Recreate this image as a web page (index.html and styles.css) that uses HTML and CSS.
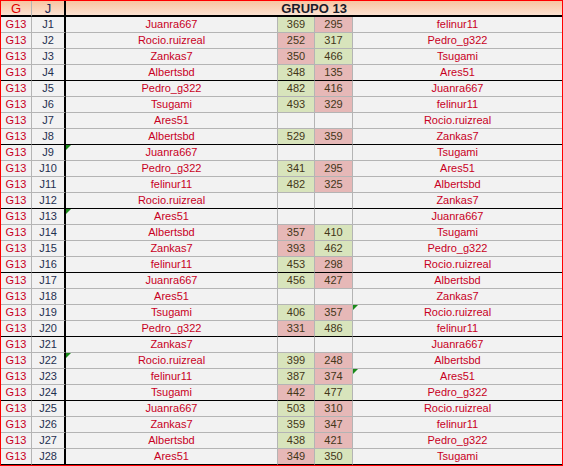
FILE: index.html
```html
<!DOCTYPE html>
<html>
<head>
<meta charset="utf-8">
<link rel="stylesheet" href="styles.css">
</head>
<body>
<div class="sheet">
  <div class="row head"><div class="c g">G</div><div class="c j">J</div><div class="c title">GRUPO 13</div></div>
  <div class="row"><div class="c g">G13</div><div class="c j">J1</div><div class="c n">Juanra667</div><div class="c s w">369</div><div class="c s l">295</div><div class="c n last">felinur11</div></div>
  <div class="row"><div class="c g">G13</div><div class="c j">J2</div><div class="c n">Rocio.ruizreal</div><div class="c s l">252</div><div class="c s w">317</div><div class="c n last">Pedro_g322</div></div>
  <div class="row"><div class="c g">G13</div><div class="c j">J3</div><div class="c n">Zankas7</div><div class="c s l">350</div><div class="c s w">466</div><div class="c n last">Tsugami</div></div>
  <div class="row end"><div class="c g">G13</div><div class="c j">J4</div><div class="c n">Albertsbd</div><div class="c s w">348</div><div class="c s l">135</div><div class="c n last">Ares51</div></div>
  <div class="row"><div class="c g">G13</div><div class="c j">J5</div><div class="c n">Pedro_g322</div><div class="c s w">482</div><div class="c s l">416</div><div class="c n last">Juanra667</div></div>
  <div class="row"><div class="c g">G13</div><div class="c j">J6</div><div class="c n">Tsugami</div><div class="c s w">493</div><div class="c s l">329</div><div class="c n last">felinur11</div></div>
  <div class="row"><div class="c g">G13</div><div class="c j">J7</div><div class="c n">Ares51</div><div class="c s"></div><div class="c s"></div><div class="c n last">Rocio.ruizreal</div></div>
  <div class="row end"><div class="c g">G13</div><div class="c j">J8</div><div class="c n">Albertsbd</div><div class="c s w">529</div><div class="c s l">359</div><div class="c n last">Zankas7</div></div>
  <div class="row"><div class="c g">G13</div><div class="c j">J9</div><div class="c n note">Juanra667</div><div class="c s"></div><div class="c s"></div><div class="c n last">Tsugami</div></div>
  <div class="row"><div class="c g">G13</div><div class="c j">J10</div><div class="c n">Pedro_g322</div><div class="c s w">341</div><div class="c s l">295</div><div class="c n last">Ares51</div></div>
  <div class="row"><div class="c g">G13</div><div class="c j">J11</div><div class="c n">felinur11</div><div class="c s w">482</div><div class="c s l">325</div><div class="c n last">Albertsbd</div></div>
  <div class="row end"><div class="c g">G13</div><div class="c j">J12</div><div class="c n">Rocio.ruizreal</div><div class="c s"></div><div class="c s"></div><div class="c n last">Zankas7</div></div>
  <div class="row"><div class="c g">G13</div><div class="c j">J13</div><div class="c n note">Ares51</div><div class="c s"></div><div class="c s"></div><div class="c n last">Juanra667</div></div>
  <div class="row"><div class="c g">G13</div><div class="c j">J14</div><div class="c n">Albertsbd</div><div class="c s l">357</div><div class="c s w">410</div><div class="c n last">Tsugami</div></div>
  <div class="row"><div class="c g">G13</div><div class="c j">J15</div><div class="c n">Zankas7</div><div class="c s l">393</div><div class="c s w">462</div><div class="c n last">Pedro_g322</div></div>
  <div class="row end"><div class="c g">G13</div><div class="c j">J16</div><div class="c n">felinur11</div><div class="c s w">453</div><div class="c s l">298</div><div class="c n last">Rocio.ruizreal</div></div>
  <div class="row"><div class="c g">G13</div><div class="c j">J17</div><div class="c n">Juanra667</div><div class="c s w">456</div><div class="c s l">427</div><div class="c n last">Albertsbd</div></div>
  <div class="row"><div class="c g">G13</div><div class="c j">J18</div><div class="c n">Ares51</div><div class="c s"></div><div class="c s"></div><div class="c n last">Zankas7</div></div>
  <div class="row"><div class="c g">G13</div><div class="c j">J19</div><div class="c n">Tsugami</div><div class="c s w">406</div><div class="c s l">357</div><div class="c n last note">Rocio.ruizreal</div></div>
  <div class="row end"><div class="c g">G13</div><div class="c j">J20</div><div class="c n">Pedro_g322</div><div class="c s l">331</div><div class="c s w">486</div><div class="c n last">felinur11</div></div>
  <div class="row"><div class="c g">G13</div><div class="c j">J21</div><div class="c n">Zankas7</div><div class="c s"></div><div class="c s"></div><div class="c n last">Juanra667</div></div>
  <div class="row"><div class="c g">G13</div><div class="c j">J22</div><div class="c n note">Rocio.ruizreal</div><div class="c s w">399</div><div class="c s l">248</div><div class="c n last">Albertsbd</div></div>
  <div class="row"><div class="c g">G13</div><div class="c j">J23</div><div class="c n">felinur11</div><div class="c s w">387</div><div class="c s l">374</div><div class="c n last note">Ares51</div></div>
  <div class="row end"><div class="c g">G13</div><div class="c j">J24</div><div class="c n">Tsugami</div><div class="c s l">442</div><div class="c s w">477</div><div class="c n last">Pedro_g322</div></div>
  <div class="row"><div class="c g">G13</div><div class="c j">J25</div><div class="c n">Juanra667</div><div class="c s w">503</div><div class="c s l">310</div><div class="c n last">Rocio.ruizreal</div></div>
  <div class="row"><div class="c g">G13</div><div class="c j">J26</div><div class="c n">Zankas7</div><div class="c s w">359</div><div class="c s l">347</div><div class="c n last">felinur11</div></div>
  <div class="row"><div class="c g">G13</div><div class="c j">J27</div><div class="c n">Albertsbd</div><div class="c s w">438</div><div class="c s l">421</div><div class="c n last">Pedro_g322</div></div>
  <div class="row end"><div class="c g">G13</div><div class="c j">J28</div><div class="c n">Ares51</div><div class="c s l">349</div><div class="c s w">350</div><div class="c n last">Tsugami</div></div>
</div>
</body>
</html>
```

FILE: styles.css
```css
html, body {
  margin: 0;
  padding: 0;
  background: #ffffff;
}
.sheet {
  width: 563px;
  box-sizing: border-box;
  border: 1px solid #ff0000;
  border-bottom-width: 2px;
  font-family: "Liberation Sans", Arial, sans-serif;
  font-size: 11px;
}
.row {
  display: grid;
  grid-template-columns: 31px 34px 212px 37px 38px 1fr;
  height: 16px;
}
.c {
  box-sizing: border-box;
  border-right: 1px solid #b4b4b4;
  border-bottom: 1px solid #b4b4b4;
  background: #f2f2f2;
  display: flex;
  align-items: center;
  justify-content: center;
  line-height: 1;
  position: relative;
  white-space: nowrap;
}
.g { color: #c8001e; }
.j { color: #1f3050; border-right: 2px solid #000; }
.n { color: #c8001e; }
.last { border-right: none; }
.s { color: #433618; }
.s.w { background: #d8e4bc; }
.s.l { background: #e6b8b7; }
.row.end .c { border-bottom-color: #000; }
.head {
  height: 16px;
  background: linear-gradient(#f8c4a0, #fce6d8);
}
.head .c {
  background: transparent;
  border-bottom: 2px solid #000;
  font-size: 13px;
}
.head .g { color: #e00000; }
.head .j { color: #1a2a5a; }
.head .title {
  grid-column: 3 / -1;
  border-right: none;
  font-weight: bold;
  color: #1a1a2a;
}
.note::before {
  content: "";
  position: absolute;
  left: 0;
  top: 0;
  border-top: 5px solid #1a8a1a;
  border-right: 5px solid transparent;
}
```
